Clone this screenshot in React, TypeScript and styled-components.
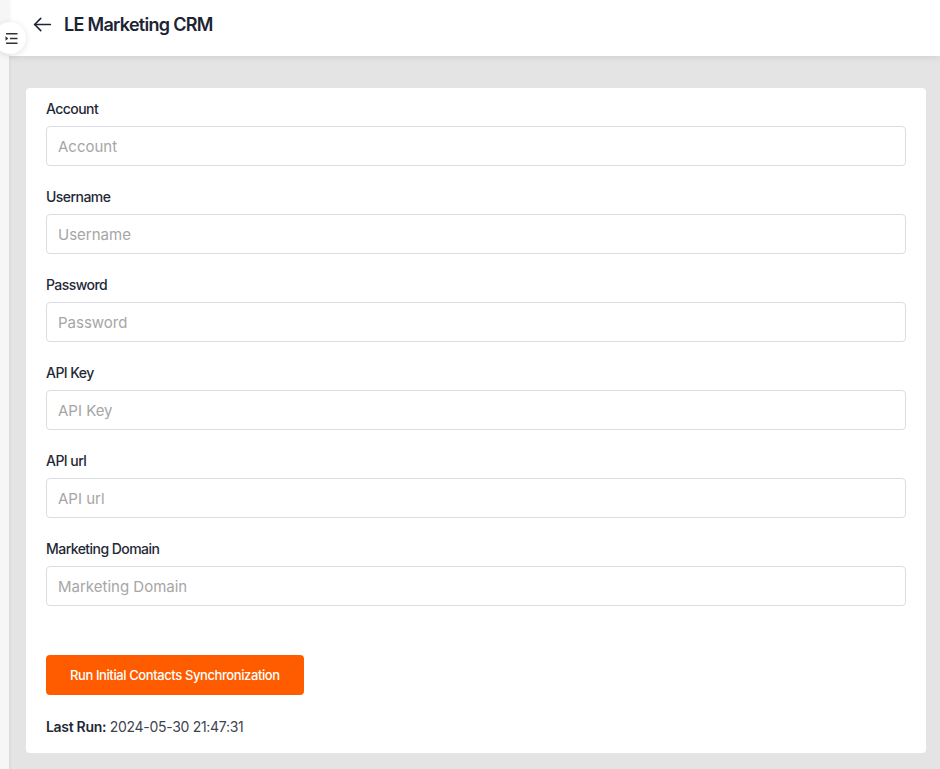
import styled, { createGlobalStyle } from 'styled-components';

const GlobalStyle = createGlobalStyle`
  * {
    box-sizing: border-box;
  }

  body {
    margin: 0;
    font-family: Inter, 'Noto Sans', sans-serif;
    background: #e4e4e4;
  }
`;

const fields = ['Account', 'Username', 'Password', 'API Key', 'API url', 'Marketing Domain'];

const App = () => {
  return (
    <>
      <GlobalStyle />
      <Shell>
        <Sidebar>
          <Toggle aria-label="Toggle sidebar">
            <svg width="13" height="11" viewBox="0 0 13 11" fill="none">
              <path d="M0.5 3.2 L3.4 5.5 L0.5 7.8 Z" fill="#333" />
              <path d="M1 0.8 H12.5 M5 5.5 H12.5 M1 10.2 H12.5" stroke="#333" strokeWidth="1.4" />
            </svg>
          </Toggle>
        </Sidebar>

        <Main>
          <Header>
            <BackButton aria-label="Back">
              <svg width="21" height="21" viewBox="0 0 24 24" fill="none" stroke="#1c2434" strokeWidth="1.8" strokeLinecap="round" strokeLinejoin="round">
                <path d="M21 12H3" />
                <path d="M10 5l-7 7 7 7" />
              </svg>
            </BackButton>
            <Title>LE Marketing CRM</Title>
          </Header>

          <Content>
            <Card>
              <Form>
                {fields.map((name) => (
                  <Field key={name}>
                    <Label>{name}</Label>
                    <Input placeholder={name} />
                  </Field>
                ))}
              </Form>

              <SyncButton type="button">Run Initial Contacts Synchronization</SyncButton>

              <LastRun>
                <strong>Last Run:</strong> 2024-05-30 21:47:31
              </LastRun>
            </Card>
          </Content>
        </Main>
      </Shell>
    </>
  );
};

const Shell = styled.div`
  display: flex;
  min-height: 100vh;
`;

const Sidebar = styled.aside`
  position: relative;
  width: 9px;
  flex-shrink: 0;
  background: #f6f6f6;
  box-shadow: 1px 0 3px rgba(0, 0, 0, 0.06);
  z-index: 2;
`;

const Toggle = styled.button`
  position: absolute;
  left: -6px;
  top: 22px;
  width: 32px;
  height: 32px;
  border: none;
  border-radius: 50%;
  background: #ffffff;
  box-shadow: 0 1px 6px rgba(0, 0, 0, 0.12);
  display: flex;
  align-items: center;
  justify-content: center;
  padding: 0 0 0 2px;
  cursor: pointer;
`;

const Main = styled.main`
  flex: 1;
  display: flex;
  flex-direction: column;
  background: #e4e4e4;
`;

const Header = styled.header`
  height: 56px;
  background: #ffffff;
  display: flex;
  align-items: center;
  gap: 11px;
  padding: 0 0 8px 23px;
  box-shadow: 0 2px 6px rgba(0, 0, 0, 0.08);
  position: relative;
  z-index: 1;
`;

const BackButton = styled.button`
  border: none;
  background: none;
  padding: 0;
  display: flex;
  cursor: pointer;
`;

const Title = styled.h1`
  margin: 0;
  font-size: 18px;
  font-weight: 600;
  color: #1c2434;
  letter-spacing: -0.7px;
`;

const Content = styled.div`
  padding: 32px 14px 17px 17px;
`;

const Card = styled.section`
  background: #ffffff;
  border-radius: 4px;
  padding: 12px 20px 16px;
  display: flex;
  flex-direction: column;
  align-items: flex-start;
`;

const Form = styled.div`
  width: 100%;
  display: flex;
  flex-direction: column;
  gap: 22px;
`;

const Field = styled.label`
  display: flex;
  flex-direction: column;
  gap: 8px;
`;

const Label = styled.span`
  font-size: 14px;
  line-height: 18px;
  font-weight: 500;
  color: #1f2937;
  letter-spacing: -0.55px;
`;

const Input = styled.input`
  height: 40px;
  width: 100%;
  border: 1px solid #dcdde2;
  border-radius: 4px;
  padding: 0 11px;
  font-family: inherit;
  font-size: 15px;
  color: #1f2937;
  outline: none;

  &::placeholder {
    color: #a6a6a6;
  }
`;

const SyncButton = styled.button`
  margin-top: 49px;
  height: 40px;
  padding: 0 24px;
  border: none;
  border-radius: 4px;
  background: #ff5c00;
  color: #ffffff;
  font-family: inherit;
  font-size: 13px;
  font-weight: 500;
  letter-spacing: -0.4px;
  cursor: pointer;
`;

const LastRun = styled.p`
  margin: 22px 0 0;
  font-size: 14px;
  line-height: 20px;
  color: #3d4450;
  letter-spacing: -0.3px;

  strong {
    font-weight: 600;
    color: #1f2937;
  }
`;

export default App;
